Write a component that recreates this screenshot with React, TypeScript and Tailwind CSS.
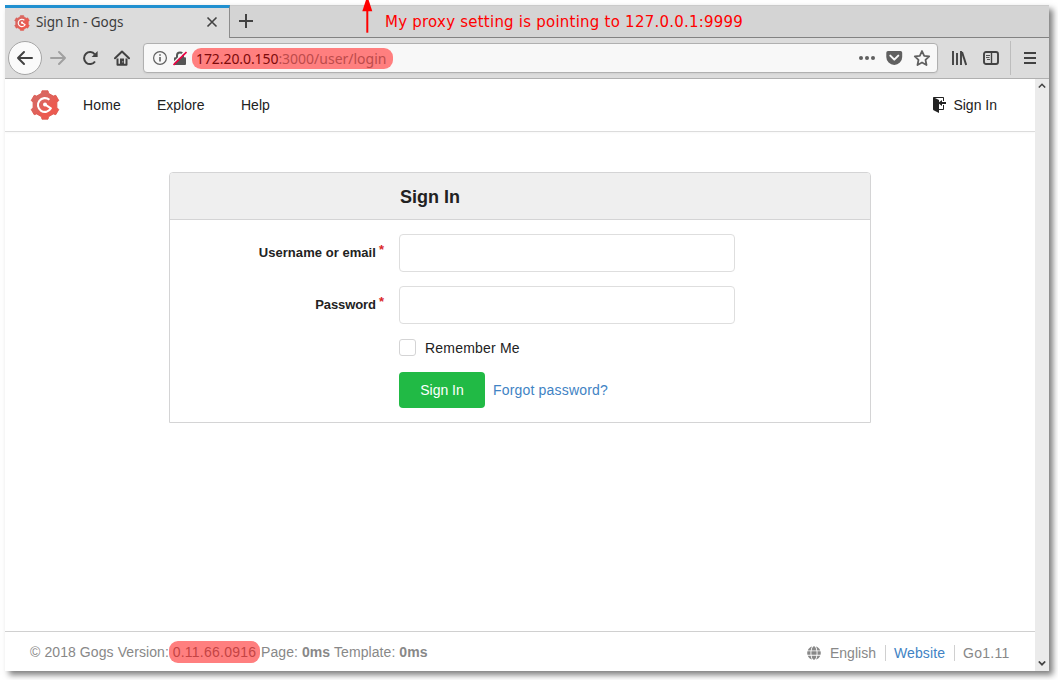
import React from "react";
import { FaGlobe } from "react-icons/fa";

const gearPoints = Array.from({ length: 24 }, (_, i) => {
  const radii = [14.5, 14.5, 12.2, 12.2];
  const offsets = [-12, 12, 17, 43];
  const a = ((Math.floor(i / 4) * 60 + offsets[i % 4] - 90) * Math.PI) / 180;
  const r = radii[i % 4];
  return `${(15 + r * Math.cos(a)).toFixed(2)},${(15 + r * Math.sin(a)).toFixed(2)}`;
}).join(" ");

function GogsLogo({ className }: { className: string }) {
  return (
    <svg viewBox="0 0 30 30" className={className}>
      <defs>
        <linearGradient id="gear" x1="0" y1="0" x2="1" y2="1">
          <stop offset="0.35" stopColor="#da6660" />
          <stop offset="0.65" stopColor="#ec5a50" />
        </linearGradient>
      </defs>
      <polygon points={gearPoints} fill="url(#gear)" stroke="#dc5a50" strokeWidth="0.9" strokeLinejoin="round" />
      <path d="M19.400 9.800A6.900 6.900 0 1 0 20.900 18.300L15.200 14.600" fill="none" stroke="#fff" strokeWidth="2.100" strokeLinejoin="round" />
      <circle cx="15" cy="14.400" r="2" fill="#fff" />
    </svg>
  );
}

function Tabs() {
  return (
    <div className="flex h-[33px] shrink-0">
      <div className="flex w-[225px] shrink-0 items-center border-t-[3px] border-r border-t-[#2090d0] border-r-[#8c8c8c] bg-[#dcdcdc] pl-[9px]">
        <GogsLogo className="h-4 w-4" />
        <span className="-mt-[2px] ml-[6px] w-[170px] text-[13.500px] tracking-[-0.05px] text-[#3c3c3c]">Sign In - Gogs</span>
        <svg viewBox="0 0 12 12" className="-mt-[2px] h-3 w-3" fill="none" stroke="#424242" strokeWidth="1.600">
          <path d="M1.500 1.500l9 9M10.500 1.500l-9 9" />
        </svg>
      </div>
      <div className="relative flex flex-1 items-start border-t border-b border-t-[#cacaca] border-b-[#828282] bg-[#d4d4d4] pt-2 pl-[9px]">
        <svg viewBox="0 0 14 14" className="h-[14px] w-[14px]" fill="none" stroke="#424242" strokeWidth="2">
          <path d="M7 0v14M0 7h14" />
        </svg>
        <svg viewBox="0 0 12 35" className="absolute -top-[7px] left-[131px] h-[35px] w-3">
          <path d="M6.300 8v25.700" stroke="#f00" strokeWidth="2" />
          <path d="M5.300 0h2l4 12.200H1.300z" fill="#f00" />
        </svg>
        <span className="absolute top-[5px] left-[155px] font-['DejaVu_Sans',sans-serif] text-[15px] leading-[22px] tracking-[0.23px] whitespace-nowrap text-[#f00]">
          My proxy setting is pointing to 127.0.0.1:9999
        </span>
      </div>
    </div>
  );
}

function AddressBar() {
  return (
    <div className="ml-[13px] flex h-[30px] w-[795px] shrink-0 items-center rounded-[4px] border border-[#b0b0b0] bg-[#f8f8f8] pr-[5px] pl-[9px] shadow-[0_1px_2px_rgba(0,0,0,0.06)]">
      <svg viewBox="0 0 14 14" className="h-[14px] w-[14px]" fill="none" stroke="#606060">
        <circle cx="7" cy="7" r="6.400" strokeWidth="1.200" />
        <path d="M7 6v4.500M7 3.200v1.600" strokeWidth="1.600" />
      </svg>
      <svg viewBox="0 0 14 15" className="ml-[6px] h-[15px] w-[14px]">
        <path d="M4 7V4.500a3 3 0 0 1 6 0V7" fill="none" stroke="#555" strokeWidth="2" />
        <rect x="1" y="6.300" width="12" height="7.700" rx="1" fill="#555" />
        <path d="M0 12.300L12.400 0" stroke="#f8f8f8" strokeWidth="1.500" />
        <path d="M.5 14L13.500 1" stroke="#ed0042" strokeWidth="1.700" />
      </svg>
      <div className="ml-[5px] flex h-[21px] w-[201px] items-center rounded-[9px] bg-[#ff7f7f] pl-[4px] text-[14px] whitespace-nowrap text-[#bd4b4b]">
        <span className="tracking-[0.010px]"><span className="tracking-[-0.080px] text-[#7d0a0a]">172.20.0.150</span><span className="tracking-[-0.010px]">:3000/user/login</span></span>
      </div>
      <svg viewBox="0 0 80 18" className="ml-auto h-[18px] w-20">
        <g fill="#606060">
          <circle cx="9" cy="9" r="2" />
          <circle cx="15" cy="9" r="2" />
          <circle cx="21" cy="9" r="2" />
          <path d="M36 2h12.500A1.700 1.700 0 0 1 50.200 3.700V8a7.950 7.950 0 0 1-15.900 0V3.700A1.700 1.700 0 0 1 36 2z" />
        </g>
        <path d="M38.300 6.600l4 4 4-4" fill="none" stroke="#f8f8f8" strokeWidth="2" strokeLinecap="round" strokeLinejoin="round" />
        <path d="M70 2l2.200 4.800 5 .6-3.700 3.500 1 5.100L70 13.500 65.500 16l1-5.100-3.700-3.500 5-.6z" fill="none" stroke="#606060" strokeWidth="1.800" strokeLinejoin="round" />
      </svg>
    </div>
  );
}

function Toolbar() {
  return (
    <div className="flex h-[41px] shrink-0 items-center border-b border-[#b0b0b0] bg-[#dcdcdc] pl-[3px]">
      <div className="flex h-[34px] w-[34px] items-center justify-center rounded-full border border-[#a5a5a5] bg-[#fafafa]">
        <svg viewBox="0 0 18 16" className="h-4 w-[18px]" fill="none" stroke="#424242" strokeWidth="2" strokeLinecap="round" strokeLinejoin="round">
          <path d="M16 8H2M8 2L2 8l6 6" />
        </svg>
      </div>
      <svg viewBox="0 0 18 16" className="ml-[7px] h-4 w-[18px]" fill="none" stroke="#a0a0a0" strokeWidth="2" strokeLinecap="round" strokeLinejoin="round">
        <path d="M2 8h14M10 2l6 6-6 6" />
      </svg>
      <svg viewBox="0 0 16 16" className="ml-[15px] h-4 w-4" fill="none" stroke="#424242" strokeWidth="2">
        <path d="M12.800 4.400A6 6 0 1 0 13 11.500" />
        <path d="M15.600 1v6H9.600z" fill="#424242" stroke="none" />
      </svg>
      <svg viewBox="0 0 16 16" className="ml-4 h-4 w-4">
        <path d="M1 8.200l7-6.700 7 6.700" fill="none" stroke="#424242" strokeWidth="2" strokeLinecap="round" strokeLinejoin="round" />
        <path d="M3.500 8.500v6.200h9V8.500" fill="none" stroke="#424242" strokeWidth="2" strokeLinejoin="round" />
        <path d="M6 8.500h4v6.200H6z" fill="#424242" />
        <circle cx="8.800" cy="11.800" r=".6" fill="#dcdcdc" />
      </svg>
      <AddressBar />
      <svg viewBox="0 0 16 16" className="ml-[13px] h-4 w-4" fill="none" stroke="#424242" strokeWidth="2">
        <path d="M2 1v14M6 3v12M10 1v14" strokeWidth="1.900" />
        <path d="M11 2l4.200 13" />
      </svg>
      <svg viewBox="0 0 16 14" className="ml-4 h-[14px] w-4" fill="none" stroke="#424242">
        <rect x="1" y="1" width="14" height="12" rx="2" strokeWidth="1.900" />
        <path d="M8.500 1v12" strokeWidth="1.400" />
        <path d="M3 4.500h4M3 6.500h3.500M4 8.500h3" strokeWidth=".9" />
      </svg>
      <div className="ml-[11px] h-[34px] w-px bg-[#bdbdbd]" />
      <svg viewBox="0 0 12 12" className="ml-[13px] h-3 w-3" fill="none" stroke="#424242" strokeWidth="2">
        <path d="M0 1h12M0 6h12M0 11h12" />
      </svg>
    </div>
  );
}

function Field({ label, tracking }: { label: string; tracking: string }) {
  return (
    <div className="mb-[14px] flex h-[38px]">
      <label className="mr-[15px] w-[214px] pt-[9px] text-right text-[13px] leading-[19px] font-bold whitespace-nowrap">
        <span className={tracking}>{label}</span>
        <span className="relative -top-[3px] ml-[3px] text-[#db2828]">*</span>
      </label>
      <input aria-label={label} className="w-[336px] rounded-[4px] border border-[#dedede] bg-white px-3 outline-none" />
    </div>
  );
}

function SignInCard() {
  return (
    <form className="mt-10 ml-[164px] h-[251px] w-[702px] rounded-t-[4px] border border-[#d4d4d5] bg-white" onSubmit={(e) => e.preventDefault()}>
      <h3 className="h-[47px] rounded-t-[3px] border-b border-[#d4d4d5] bg-[#efefef] pt-[11px] pl-[230px] text-[18px] leading-[26px] font-bold">Sign In</h3>
      <div className="pt-[14px]">
        <Field label="Username or email" tracking="tracking-[0.050px]" />
        <Field label="Password" tracking="tracking-[-0.080px]" />
        <div className="ml-[229px] flex h-[20px] items-center pb-px">
          <div className="h-[17px] w-[17px] rounded-[3px] border border-[#d4d4d5]" />
          <span className="ml-[9px] pt-px tracking-[0.200px]">Remember Me</span>
        </div>
        <div className="mt-[14px] ml-[229px] flex items-center">
          <button className="h-9 w-[86px] rounded-[4px] bg-[#21ba45] text-white">Sign In</button>
          <a className="ml-2 tracking-[0.180px] text-[#4183c4]">Forgot password?</a>
        </div>
      </div>
    </form>
  );
}

function Page() {
  return (
    <div className="flex w-[1030px] flex-col bg-white text-[14px] text-[#222]">
      <nav className="flex h-[53px] shrink-0 items-center border-b border-[#dcdcdc] pr-[38px] pl-[25px] shadow-[0_1px_2px_rgba(0,0,0,0.03)]">
        <GogsLogo className="h-[30px] w-[30px]" />
        <a className="ml-[23px] w-[38px] tracking-[0.150px]">Home</a>
        <a className="ml-9 w-[48px]">Explore</a>
        <a className="ml-9">Help</a>
        <a className="ml-auto flex items-center">
          <svg viewBox="0 0 14 16" className="mr-[7px] h-4 w-[14px]" fill="#222">
            <path d="M7 6.750V12h4V8h1v4c0 .55-.45 1-1 1H7v3l-5.450-2.720c-.33-.17-.55-.52-.55-.91V1c0-.55.45-1 1-1h9c.55 0 1 .45 1 1v3h-1V1H3l4 2v2.250L10 3v2h4v2h-4v2L7 6.750z" />
          </svg>
          Sign In
        </a>
      </nav>
      <SignInCard />
      <footer className="mt-auto flex h-[40px] items-center border-t border-[#d0d0d0] pt-px pr-[25px] pl-[25px] text-[#888]">
        <span className="w-[139px] tracking-[0.090px] whitespace-nowrap">© 2018 Gogs Version:</span>
        <span className="-mt-px flex h-[22px] w-[91px] items-center justify-center rounded-[9px] bg-[#ff7f7f] pt-px text-[#c44444]"><span className="tracking-[0.250px]">0.11.66.0916</span></span>
        <span className="ml-px tracking-[0.080px]">Page: <strong>0ms</strong> Template: <strong>0ms</strong></span>
        <div className="ml-auto flex items-center pt-[2px]">
          <FaGlobe size={14} />
          <span className="ml-[9px] w-[46px]">English</span>
          <span className="ml-[9px] h-4 border-l border-[#d0d0d0]" />
          <a className="ml-2 w-[51px] tracking-[0.100px]">
            <span className="text-[#4183c4]">Website</span>
          </a>
          <span className="ml-[9px] h-4 border-l border-[#d0d0d0]" />
          <span className="ml-2 w-[47px] tracking-[0.300px]">Go1.11</span>
        </div>
      </footer>
    </div>
  );
}

export default function App() {
  return (
    <div className="h-[680px] w-[1058px] overflow-hidden bg-white pt-[5px] pl-[5px] font-['Liberation_Sans',Arial,sans-serif]">
      <div className="flex h-[666px] w-[1044px] flex-col shadow-[4px_4px_6px_rgba(0,0,0,0.5)]">
        <header className="shrink-0 font-['Noto_Sans',sans-serif]">
          <Tabs />
          <Toolbar />
        </header>
        <main className="flex min-h-0 flex-1">
          <Page />
          <div className="flex w-[14px] flex-col items-center justify-between bg-[#ebebeb] pt-1 pb-[5px]">
            <svg viewBox="0 0 8 5" className="h-[5px] w-2" fill="none" stroke="#424242" strokeWidth="1.500"><path d="M.8 4.500L4 1.300l3.200 3.200" /></svg>
            <svg viewBox="0 0 8 5" className="h-[5px] w-2" fill="none" stroke="#424242" strokeWidth="1.700"><path d="M.8 .5L4 3.700 7.200 .5" /></svg>
          </div>
        </main>
      </div>
    </div>
  );
}
